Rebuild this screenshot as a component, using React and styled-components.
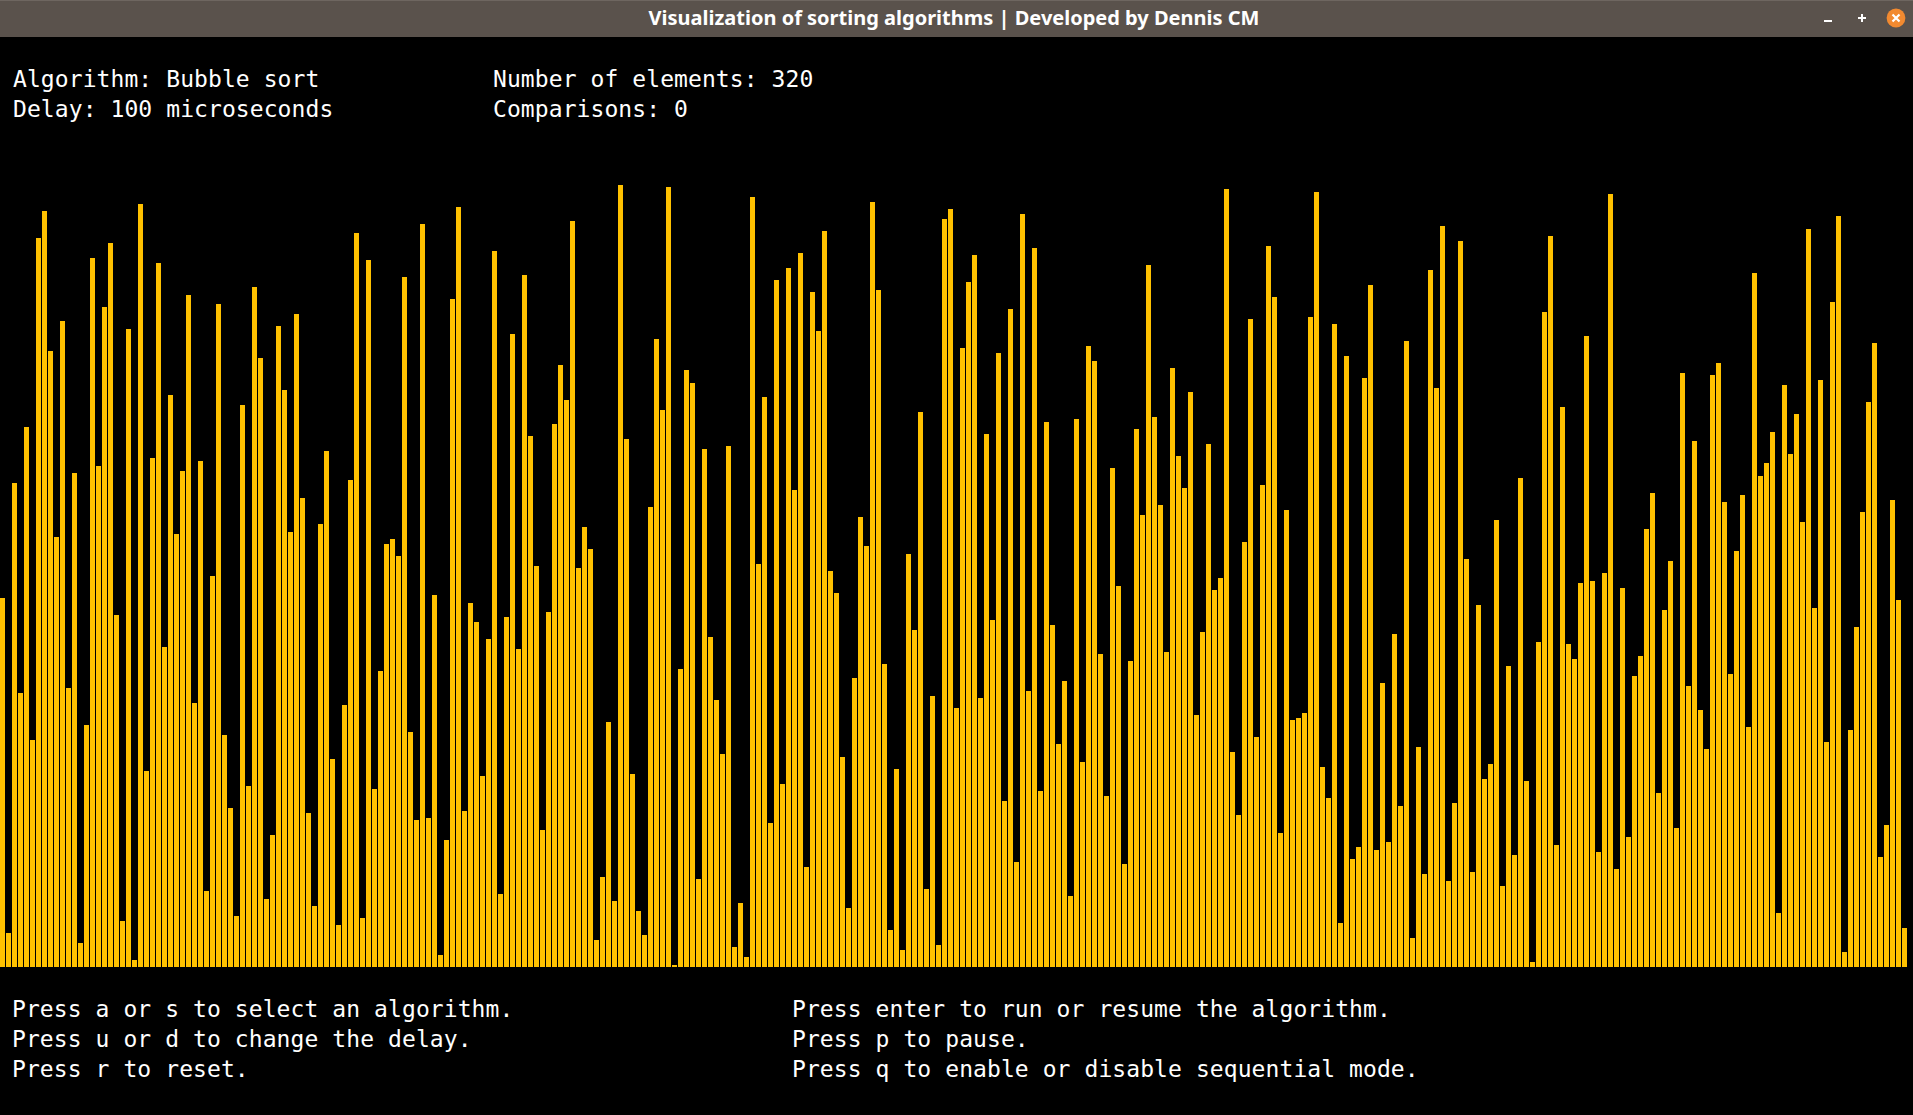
import React from 'react'
import styled, { createGlobalStyle } from 'styled-components'

// bar tops as read off the capture, 1.936 units per pixel, baseline at 1543
const samples = [
  829,1477,606,1012,498,1103,132,79,350,710,292,1003,587,1496,1074,170,573,265,141,861,
  1454,308,1529,66,1163,558,180,923,436,705,583,242,1032,563,1396,786,259,1094,1235,1444,
  455,1192,226,364,1411,1287,302,426,701,279,635,1245,1425,685,544,1140,1462,1036,600,122,
  1448,174,1198,970,724,714,747,207,1088,1258,105,1254,823,1520,1297,250,72,1241,838,875,
  1173,908,157,1402,865,317,927,203,515,767,1278,856,492,377,445,99,770,691,734,1491,
  1369,1069,1415,29,521,1169,1434,1481,652,327,465,33,1539,966,387,412,1372,540,904,1026,
  1131,534,1504,1419,1523,52,763,439,1264,213,1189,190,619,161,1349,236,312,118,776,819,
  1136,1429,983,672,728,62,232,956,1471,1160,1510,743,890,468,1392,1018,1500,95,75,1041,
  345,217,165,1022,511,871,354,1221,269,1340,85,1009,151,1202,488,881,1111,989,1405,482,
  1146,341,370,937,1212,577,805,1343,950,501,668,184,478,648,933,383,554,616,430,1055,
  894,530,813,790,37,1127,1249,720,288,1098,610,147,246,1283,658,1065,1061,1051,285,43,
  1156,1216,298,1458,360,1334,1311,403,223,1316,993,1301,898,1231,331,1487,1117,1363,194,422,
  108,1376,1225,137,753,1359,842,1179,1150,678,1386,960,1326,596,1183,1533,914,275,128,1307,
  459,918,947,799,321,796,1320,780,46,1353,809,1291,980,941,695,625,1206,852,757,1274,
  393,999,525,1045,1121,397,374,643,976,738,629,1078,199,592,567,507,1438,416,550,472,
  681,114,848,407,1107,256,89,1514,1084,885,662,449,335,1330,1268,639,832,1467,
]
const heights = samples.map((t) => Math.round((1543 - t) / 1.936))

const GlobalStyle = createGlobalStyle`
  html, body {
    margin: 0;
    height: 100%;
    background: #000;
  }
  #root {
    height: 100%;
  }
`

const Window = styled.div`
  width: 1913px;
  height: 1115px;
  overflow: hidden;
  display: flex;
  flex-direction: column;
  background: #000;
`

const TitleBar = styled.div`
  height: 37px;
  flex: none;
  box-sizing: border-box;
  border-top: 1px solid #6e6660;
  background: #5a524c;
  display: grid;
  grid-template-columns: 1fr auto 1fr;
  align-items: center;
`

const Title = styled.div`
  grid-column: 2;
  font-family: "Noto Sans", sans-serif;
  font-weight: 700;
  font-size: 20px;
  color: #fff;
  white-space: nowrap;
  margin: 0 5px 3px 0;
`

const Controls = styled.div`
  grid-column: 3;
  justify-self: end;
  display: flex;
  align-items: center;
  gap: 14px;
  padding: 0 7px 2px 0;
`

const ControlIcon = styled.svg`
  width: 20px;
  height: 20px;
  display: block;
`

const Terminal = styled.div`
  font-family: "DejaVu Sans Mono", monospace;
  font-size: 23px;
  line-height: 30px;
  letter-spacing: 0.08px;
  color: #fff;
  white-space: pre;
`

const Info = styled(Terminal)`
  height: 148px;
  flex: none;
  box-sizing: border-box;
  padding: 27px 0 0 13px;
  display: grid;
  grid-template-columns: 480px 1fr;
  align-content: start;
`

const Chart = styled.div`
  height: 782px;
  flex: none;
  display: flex;
  align-items: flex-end;
  gap: 1px;
`

const Bar = styled.div`
  width: 5px;
  flex: none;
  background: #ffc100;
`

const Help = styled(Terminal)`
  flex: none;
  padding: 27px 0 0 12px;
  display: grid;
  grid-template-columns: 780px 1fr;
`

function App() {
  return (
    <Window>
      <GlobalStyle />
      <TitleBar>
        <Title>Visualization of sorting algorithms | Developed by Dennis CM</Title>
        <Controls>
          <ControlIcon viewBox="0 0 20 20">
            <rect x="6" y="12" width="8" height="2" fill="#fff" />
          </ControlIcon>
          <ControlIcon viewBox="0 0 20 20">
            <path d="M6 10h8M10 6v8" stroke="#fff" strokeWidth="2" />
          </ControlIcon>
          <ControlIcon viewBox="0 0 20 20">
            <circle cx="10" cy="10" r="9.4" fill="#f28a30" />
            <path d="M6.5 6.5l7 7M13.5 6.5l-7 7" stroke="#fff" strokeWidth="2.2" />
          </ControlIcon>
        </Controls>
      </TitleBar>

      <Info>
        <div>Algorithm: Bubble sort</div>
        <div>Number of elements: 320</div>
        <div>Delay: 100 microseconds</div>
        <div>Comparisons: 0</div>
      </Info>

      <Chart>
        {heights.map((h, i) => (
          <Bar key={i} style={{ height: h }} />
        ))}
      </Chart>

      <Help>
        <div>Press a or s to select an algorithm.</div>
        <div>Press enter to run or resume the algorithm.</div>
        <div>Press u or d to change the delay.</div>
        <div>Press p to pause.</div>
        <div>Press r to reset.</div>
        <div>Press q to enable or disable sequential mode.</div>
      </Help>
    </Window>
  )
}

export default App
